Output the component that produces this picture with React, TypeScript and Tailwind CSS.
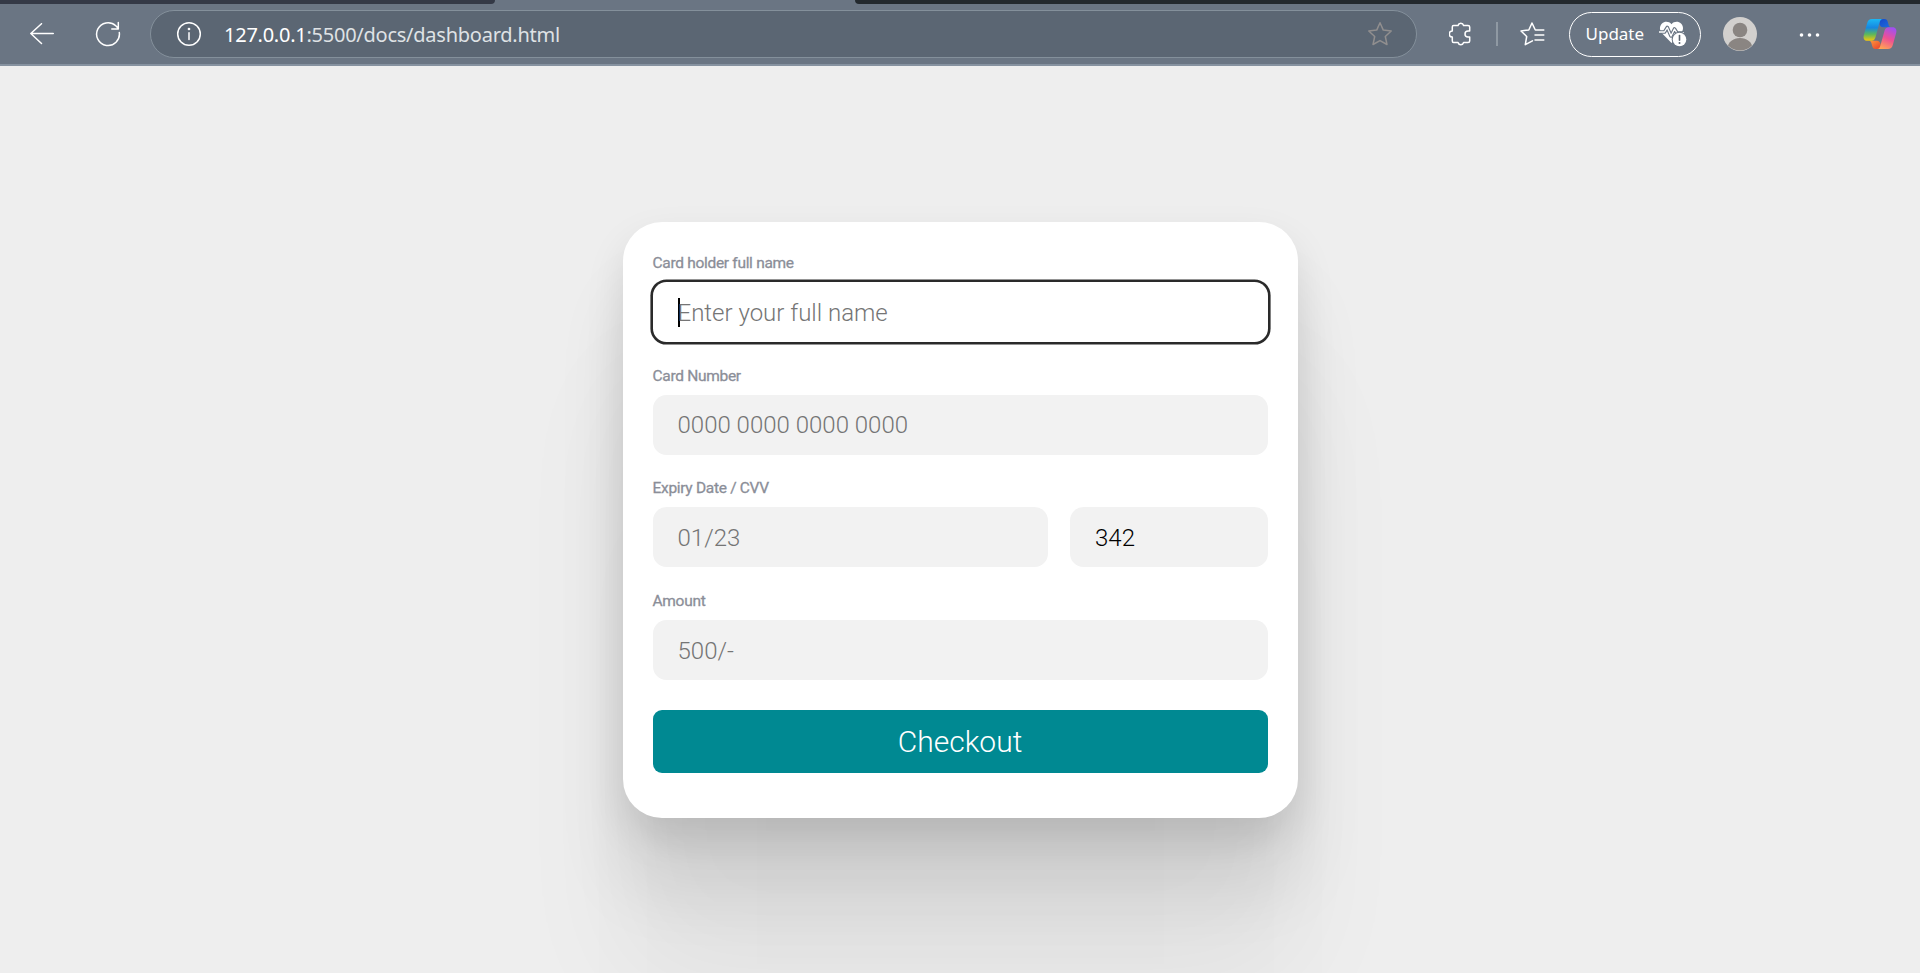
import React from 'react';

const fieldBase =
  'flex h-[60px] min-w-0 items-center rounded-[13.5px] pl-[25px] pt-px text-[24px] leading-none font-light whitespace-pre';

function Label({ children }: { children: React.ReactNode }) {
  return (
    <span className="block h-[17.5px] text-[15.5px] leading-[19.5px] font-normal tracking-[-0.3px] text-[#8b8e98] [-webkit-text-stroke:0.3px_#8b8e98]">
      {children}
    </span>
  );
}

function Field({ label, children }: { label: string; children: React.ReactNode }) {
  return (
    <div className="flex flex-col gap-[10.5px]">
      <Label>{label}</Label>
      {children}
    </div>
  );
}

function CopilotIcon() {
  return (
    <svg className="ml-[43px] h-[30px] w-[34px] shrink-0" viewBox="0 0 34 30">
      <defs>
        <linearGradient id="cpA" x1="0" y1="0" x2="0" y2="1">
          <stop offset="0" stopColor="#1cb8f4" />
          <stop offset="0.4" stopColor="#1687e0" />
          <stop offset="0.7" stopColor="#5cb85c" />
          <stop offset="1" stopColor="#f4c80c" />
        </linearGradient>
        <linearGradient id="cpB" x1="0.7" y1="0" x2="0.3" y2="1">
          <stop offset="0" stopColor="#a050f0" />
          <stop offset="0.5" stopColor="#ee5094" />
          <stop offset="1" stopColor="#ffa454" />
        </linearGradient>
        <linearGradient id="cpC" x1="0" y1="0" x2="1" y2="1">
          <stop offset="0" stopColor="#1648c8" />
          <stop offset="1" stopColor="#1c6ce0" />
        </linearGradient>
        <linearGradient id="cpD" x1="0" y1="0" x2="1" y2="1">
          <stop offset="0" stopColor="#ff9a3c" />
          <stop offset="1" stopColor="#e8402c" />
        </linearGradient>
      </defs>
      <path d="M16 0H21.5C23.5 0 24.3 1.2 24.8 3L25.8 6.5C26.2 7.7 27 8.3 28.2 8.3H20C18 8.3 17 7 16.5 5Z" fill="url(#cpC)" />
      <path d="M18 30H12.5C10.5 30 9.7 28.8 9.2 27L8.2 23.5C7.8 22.3 7 21.7 5.8 21.7H14C16 21.7 17 23 17.5 25Z" fill="url(#cpD)" />
      <path d="M9 0H20C18 0 17.2 1.5 16.6 3.5L12.4 18.5C11.8 20.5 10.6 21.8 8.6 21.8H4.5C1.2 21.8 0 19.3 0.8 16.2L4.2 4C4.9 1.5 6.4 0 9 0Z" fill="url(#cpA)" />
      <path d="M25 30H14C16 30 16.8 28.5 17.4 26.5L21.6 11.5C22.2 9.5 23.4 8.2 25.4 8.2H29.5C32.8 8.2 34 10.7 33.2 13.8L29.8 26C29.1 28.5 27.6 30 25 30Z" fill="url(#cpB)" />
    </svg>
  );
}

function BrowserBar() {
  return (
    <header className="flex h-[66px] shrink-0 flex-col border-b-2 border-[#8692a0] bg-[#6a7583]">
      <div className="flex h-1 shrink-0 justify-between">
        <div className="h-1 w-[495px] rounded-br-[4px] bg-[#343946]" />
        <div className="h-1 w-[1065px] rounded-bl-[4px] bg-[#23292e]" />
      </div>
      <div className="flex h-[60px] items-center">
        <svg className="ml-[30px] h-[22px] w-[24px] shrink-0" viewBox="0 0 24 22" fill="none" stroke="#fff" strokeWidth="1.5" strokeLinecap="round" strokeLinejoin="round">
          <path d="M23.3 10.5H0.8M11.5 0.7L0.8 10.5L11.5 20.5" />
        </svg>
        <svg className="ml-[41px] h-[26px] w-[26px] shrink-0" viewBox="0 0 26 26" fill="none" stroke="#fff" strokeWidth="1.5" strokeLinecap="round" strokeLinejoin="round">
          <path d="M24.3 11.5A11.4 11.4 0 1 1 20.8 4.8L23.3 7.5M23.3 1.5V8H16.8" />
        </svg>
        <div className="ml-[29px] flex h-[48px] w-[1267px] items-center rounded-full border-[1.5px] border-[#84909b] bg-[#5b6673] font-['Noto_Sans',sans-serif]">
          <svg className="ml-[25px] h-[26px] w-[26px]" viewBox="0 0 26 26" fill="none" stroke="#fff" strokeWidth="1.5" strokeLinecap="round">
            <circle cx="13" cy="13" r="11.3" />
            <path d="M13 11.8V18.5" />
            <circle cx="13" cy="8" r="0.6" fill="#fff" />
          </svg>
          <span className="mt-0.5 ml-[22px] text-[20px] tracking-[-0.25px] whitespace-nowrap text-[#dfe2e5]">
            <span className="text-white">127.0.0.1</span>:5500/docs/dashboard.html
          </span>
          <svg className="mr-[23px] ml-auto h-[26px] w-[26px]" viewBox="0 0 26 26" fill="none" stroke="#918f8f" strokeWidth="1.5" strokeLinejoin="round">
            <path d="M13 1.8L16.3 9.1L24.2 10L18.3 15.5L20 23.5L13 19.6L6 23.5L7.7 15.5L1.8 10L9.7 9.1Z" />
          </svg>
        </div>
        <svg className="ml-[32px] h-[24px] w-[22px] shrink-0" viewBox="0 0 22 24" fill="none" stroke="#fff" strokeWidth="1.5" strokeLinejoin="round">
          <path d="M4.6 3.5H9A2.9 2.9 0 0 1 14.6 3.5H19Q20.7 3.5 20.7 5V9H19A3 3 0 0 0 19 15H20.7V19Q20.7 20.5 19 20.5H14.6A2.9 2.9 0 0 1 9 20.5H4.6Q3.3 20.5 3.3 19V15A3 3 0 0 1 3.3 9V5Q3.3 3.5 4.6 3.5Z" />
        </svg>
        <div className="ml-[25px] h-[24px] w-[1.5px] bg-[#8f99a3]" />
        <svg className="ml-[22px] h-[24px] w-[25px] shrink-0" viewBox="0 0 25 24" fill="none" stroke="#fff" strokeWidth="1.5" strokeLinecap="round" strokeLinejoin="round">
          <path d="M23.8 8H15.3L12 1L8.8 8L1 9L6.7 14.5L5.3 22.7L12.5 18.8M15 13H23.8M15 18H23.8" />
        </svg>
        <div className="ml-[24px] flex h-[45px] w-[132px] items-center rounded-full border-[1.5px] border-white font-['Noto_Sans',sans-serif]">
          <span className="ml-[16px] w-[58px] text-[17px] whitespace-nowrap text-white">Update</span>
          <svg className="ml-[15px] h-[26px] w-[28px] shrink-0" viewBox="0 0 28 26">
            <path d="M12.5 3.2C15 0.2 19.5 0 22 2.6C24.7 5.3 24.7 9.4 22 12.2L12.5 22L3 12.2C0.3 9.4 0.3 5.3 3 2.6C5.5 0 10 0.2 12.5 3.2Z" fill="#fff" />
            <path d="M0 11H5.5L8.3 6.5L12 15L15.5 8L18 12H25" fill="none" stroke="#6a7583" strokeWidth="3.6" strokeLinejoin="round" />
            <path d="M0 11H5.5L8.3 6.5L12 15L15.5 8L18 12H25" fill="none" stroke="#fff" strokeWidth="1.4" strokeLinejoin="round" />
            <circle cx="20.5" cy="18.5" r="7.8" fill="#6a7583" />
            <circle cx="20.5" cy="18.5" r="6.8" fill="#fff" />
            <path d="M20.5 14.5V19.2" stroke="#59636f" strokeWidth="1.6" strokeLinecap="round" />
            <circle cx="20.5" cy="22" r="1" fill="#59636f" />
          </svg>
        </div>
        <svg className="ml-[22px] h-[34px] w-[34px] shrink-0" viewBox="0 0 34 34">
          <defs>
            <clipPath id="avatar">
              <circle cx="17" cy="17" r="16.5" />
            </clipPath>
          </defs>
          <circle cx="17" cy="17" r="17" fill="#d2d0ce" />
          <g clipPath="url(#avatar)" fill="#8a8582">
            <circle cx="17" cy="13" r="7.3" />
            <ellipse cx="17" cy="31.5" rx="12.5" ry="10.5" />
          </g>
        </svg>
        <svg className="ml-[42px] mt-px h-[4px] w-[21px] shrink-0" viewBox="0 0 21 4" fill="#fff">
          <circle cx="2.5" cy="2" r="1.8" />
          <circle cx="10.5" cy="2" r="1.8" />
          <circle cx="18.5" cy="2" r="1.8" />
        </svg>
        <CopilotIcon />
      </div>
    </header>
  );
}

export default function App() {
  return (
    <div className="flex h-[973px] w-full flex-col overflow-hidden bg-[#eeeeee] font-[Roboto,sans-serif]">
      <BrowserBar />
      <main className="flex justify-center pt-[156px]">
        <form className="flex h-[596px] w-[675px] flex-col gap-[24.7px] rounded-[39px] bg-white px-[30px] pt-[32px] shadow-[0px_280px_112px_rgba(0,0,0,0.01),0px_157px_120px_rgba(0,0,0,0.05),0px_70px_70px_rgba(0,0,0,0.09),0px_18px_39px_rgba(0,0,0,0.1)]">
          <Field label="Card holder full name">
            <div className={`${fieldBase} bg-white text-[#757575] shadow-[0_0_0_2.6px_#2a2a2a]`}>
              <span className="-mr-0.5 h-[29px] w-0.5 bg-black" />
              Enter your full name
            </div>
          </Field>
          <Field label="Card Number">
            <div className={`${fieldBase} bg-[#f2f2f2] text-[#757575]`}>0000 0000 0000 0000</div>
          </Field>
          <Field label="Expiry Date / CVV">
            <div className="grid grid-cols-[2fr_1fr] gap-[22.5px]">
              <div className={`${fieldBase} bg-[#f2f2f2] text-[#757575]`}>01/23</div>
              <div className={`${fieldBase} bg-[#f2f2f2] text-black`}>342</div>
            </div>
          </Field>
          <Field label="Amount">
            <div className={`${fieldBase} bg-[#f2f2f2] text-[#757575]`}>500/-</div>
          </Field>
          <button type="button" className="mt-[5.5px] h-[63px] shrink-0 rounded-[9px] bg-[#008992] text-[30px] leading-none font-light text-white">
            Checkout
          </button>
        </form>
      </main>
    </div>
  );
}
